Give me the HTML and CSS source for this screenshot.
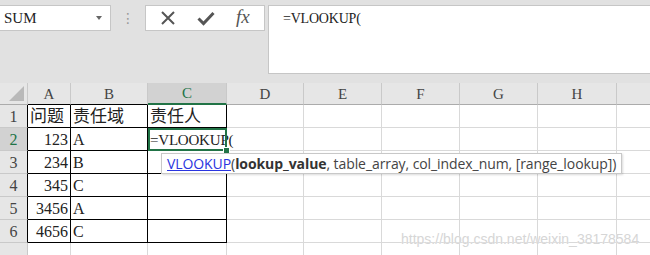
FILE: index.html
```html
<!DOCTYPE html>
<html lang="zh-CN">
<head>
  <meta charset="UTF-8" />
  <title>VLOOKUP</title>
  <link rel="stylesheet" href="styles.css">
</head>
<body>
  <div class="topbar">
    <div class="namebox">
      <span>SUM</span>
      <span class="caret"></span>
    </div>
    <div class="dots">⋮</div>
    <div class="btnbox">
      <svg class="ico" width="16" height="16" viewBox="0 0 16 16">
        <path d="M2 2 L14 14 M14 2 L2 14" stroke="#555" stroke-width="2" fill="none"/>
      </svg>
      <svg class="ico" width="18" height="16" viewBox="0 0 18 16">
        <path d="M1.5 8.5 L6.5 13.5 L16.5 3" stroke="#555" stroke-width="3" fill="none"/>
      </svg>
      <span class="fx">fx</span>
    </div>
    <div class="formula">=VLOOKUP(</div>
  </div>

  <table class="sheet">
    <colgroup>
      <col class="c-row">
      <col class="c-a">
      <col class="c-b">
      <col class="c-c">
      <col class="c-d">
      <col class="c-e">
      <col class="c-f">
      <col class="c-g">
      <col class="c-h">
      <col class="c-i">
    </colgroup>
    <tr class="head">
      <th class="corner"><span class="tri"></span></th>
      <th class="hb">A</th><th class="hb">B</th><th class="hb sel">C</th>
      <th>D</th><th>E</th><th>F</th><th>G</th><th>H</th><th></th>
    </tr>
    <tr>
      <th class="rb">1</th>
      <td class="b cn">问题</td><td class="b cn">责任域</td><td class="b cn">责任人</td>
      <td></td><td></td><td></td><td></td><td></td><td></td>
    </tr>
    <tr>
      <th class="rb sel">2</th>
      <td class="b num">123</td><td class="b">A</td><td class="b active">=VLOOKUP(</td>
      <td></td><td></td><td></td><td></td><td></td><td></td>
    </tr>
    <tr>
      <th class="rb">3</th>
      <td class="b num">234</td><td class="b">B</td><td class="b"></td>
      <td></td><td></td><td></td><td></td><td></td><td></td>
    </tr>
    <tr>
      <th class="rb">4</th>
      <td class="b num">345</td><td class="b">C</td><td class="b"></td>
      <td></td><td></td><td></td><td></td><td></td><td></td>
    </tr>
    <tr>
      <th class="rb">5</th>
      <td class="b num">3456</td><td class="b">A</td><td class="b"></td>
      <td></td><td></td><td></td><td></td><td></td><td></td>
    </tr>
    <tr>
      <th class="rb">6</th>
      <td class="b num">4656</td><td class="b">C</td><td class="b"></td>
      <td></td><td></td><td></td><td></td><td></td><td></td>
    </tr>
    <tr class="last">
      <th></th>
      <td></td><td></td><td></td><td></td><td></td><td></td><td></td><td></td><td></td>
    </tr>
  </table>

  <div class="tip"><u class="fn">VLOOKUP</u>(<b>lookup_value</b>, table_array, col_index_num, [range_lookup])</div>
  <div class="mark">https://blog.csdn.net/weixin_38178584</div>
</body>
</html>
```

FILE: styles.css
```css
body {
  margin: 0;
  width: 650px;
  height: 255px;
  overflow: hidden;
  background: #fff;
  font-family: 'Liberation Serif', 'Noto Sans CJK SC', serif;
  color: #222;
}
.topbar {
  display: flex;
  align-items: flex-start;
  box-sizing: border-box;
  height: 83px;
  padding-top: 5px;
  background: #e1e1e1;
}
.namebox {
  display: flex;
  align-items: center;
  justify-content: space-between;
  box-sizing: border-box;
  width: 111px;
  height: 26px;
  padding: 0 8px 0 4px;
  background: #fff;
  border: 1px solid #c6c6c6;
  border-left: none;
  font-size: 15px;
}
.caret {
  width: 0;
  height: 0;
  border-left: 3px solid transparent;
  border-right: 3px solid transparent;
  border-top: 4px solid #666;
}
.dots {
  width: 34px;
  text-align: center;
  line-height: 26px;
  font-size: 14px;
  color: #999;
  font-family: 'DejaVu Sans', sans-serif;
}
.btnbox {
  display: flex;
  align-items: center;
  justify-content: space-around;
  box-sizing: border-box;
  width: 120px;
  height: 26px;
  padding: 0 4px;
  background: #fff;
  border: 1px solid #c6c6c6;
}
.fx {
  font-family: 'Liberation Serif', serif;
  font-style: italic;
  font-size: 19px;
  color: #555;
  margin-top: -2px;
}
.formula {
  flex: 1;
  box-sizing: border-box;
  height: 69px;
  margin-left: 3px;
  padding: 5px 14px;
  background: #fff;
  border: 1px solid #c6c6c6;
  border-right: none;
  font-size: 14px;
  letter-spacing: -0.2px;
}

.sheet {
  table-layout: fixed;
  border-collapse: separate;
  border-spacing: 0;
  width: 690px;
}
.c-row { width: 28px; }
.c-a { width: 43px; }
.c-b { width: 77px; }
.c-c { width: 79px; }
.c-d { width: 77px; }
.c-e, .c-f, .c-g { width: 78px; }
.c-h { width: 79px; }
.c-i { width: 73px; }
.sheet th, .sheet td {
  box-sizing: border-box;
  height: 23px;
  padding: 0 2px;
  border-right: 1px solid #d9d9d9;
  border-bottom: 1px solid #d9d9d9;
  white-space: nowrap;
  overflow: visible;
  font-size: 16px;
  line-height: 20px;
  vertical-align: bottom;
}
.sheet th {
  background: #e6e6e6;
  color: #444;
  font-weight: normal;
  text-align: center;
  border-right-color: #c9c9c9;
  border-bottom-color: #c9c9c9;
}
.head th {
  height: 22px;
  font-size: 15px;
  border-bottom-color: #ababab;
  vertical-align: middle;
}
.head th.hb { border-bottom-color: #000; }
.sheet th.rb { border-right-color: #000; }
.sheet th.sel {
  background: #d2d2d2;
  color: #217346;
}
.head th.sel { border-bottom: 2px solid #217346; }
.corner { position: relative; }
.tri {
  position: absolute;
  right: 3px;
  bottom: 3px;
  width: 0;
  height: 0;
  border-left: 15px solid transparent;
  border-bottom: 15px solid #b9b9b9;
}
.sheet td.b {
  border-right-color: #000;
  border-bottom-color: #000;
}
.sheet td.cn { font-size: 17px; }
.sheet td.num { text-align: right; }
.sheet td.active {
  position: relative;
  font-size: 15px;
  letter-spacing: -0.2px;
  outline: 2px solid #217346;
  outline-offset: -2px;
}
.sheet td.active::after {
  content: "";
  position: absolute;
  right: -4px;
  bottom: -4px;
  width: 5px;
  height: 5px;
  background: #217346;
  border: 1px solid #fff;
}

.tip {
  position: absolute;
  left: 161px;
  top: 153px;
  box-sizing: border-box;
  height: 21px;
  padding: 0 5px;
  background: #fff;
  border: 1px solid #c8c8c8;
  box-shadow: 1px 1px 2px rgba(0, 0, 0, 0.15);
  font-family: 'Open Sans', sans-serif;
  font-size: 14px;
  letter-spacing: -0.08px;
  line-height: 19px;
  color: #444;
  white-space: nowrap;
}
.tip .fn { color: #2a35e0; }
.tip b { color: #333; }
.mark {
  position: absolute;
  left: 401px;
  top: 231px;
  font-family: 'Liberation Sans', sans-serif;
  font-size: 14px;
  color: #d6d6d6;
  text-shadow: 0 0 1px #fff;
}
```
